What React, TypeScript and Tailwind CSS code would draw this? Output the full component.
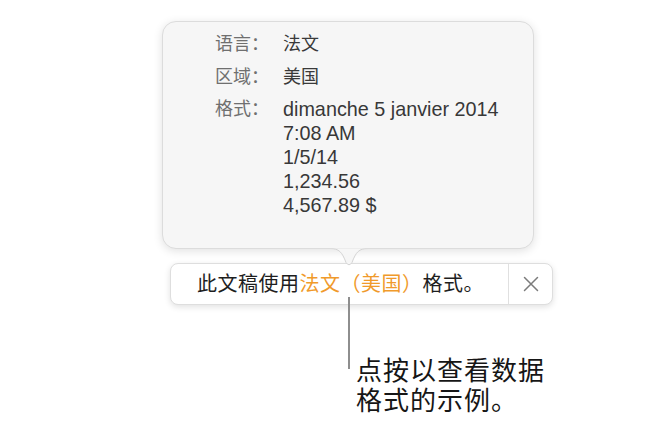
export default function App() {
  const cjk = { fontFamily: '"Liberation Sans", "Noto Sans CJK SC", sans-serif' };
  return (
    <div className="relative w-[657px] h-[422px] bg-white overflow-hidden" style={cjk}>
      <div className="pt-[21px] pl-[162px]">
        <div className="relative w-[372px] h-[228px] rounded-[14px] bg-[#f6f6f6] border border-[#dcdcdc] shadow-[0_2px_10px_rgba(0,0,0,0.12)] pt-[10px] pl-[52px] text-[18px] leading-[24px]">
          <div className="flex">
            <div className="w-[68px] text-[#6f6f6f]">语言：</div>
            <div className="text-[#3a3a3a]">法文</div>
          </div>
          <div className="flex mt-[9px]">
            <div className="w-[68px] text-[#6f6f6f]">区域：</div>
            <div className="text-[#3a3a3a]">美国</div>
          </div>
          <div className="flex mt-[8px]">
            <div className="w-[68px] text-[#6f6f6f]">格式：</div>
            <div className="flex flex-col text-[#383838] text-[19.8px] leading-[24px]">
              <span>dimanche 5 janvier 2014</span>
              <span>7:08 AM</span>
              <span>1/5/14</span>
              <span>1,234.56</span>
              <span>4,567.89 $</span>
            </div>
          </div>
          <svg className="absolute left-[167px] top-[226px] z-10" width="38" height="19" viewBox="0 0 38 19">
            <path d="M0 0.5 C 9 0.5, 12 4, 16 14.5 Q 19 19 22 14.5 C 26 4, 29 0.5, 38 0.5 Z" fill="#f6f6f6" />
            <path d="M0 0.5 C 9 0.5, 12 4, 16 14.5 Q 19 19 22 14.5 C 26 4, 29 0.5, 38 0.5" fill="none" stroke="#d4d4d4" strokeWidth="1" />
            <rect x="0" y="-2" width="38" height="2.2" fill="#f6f6f6" />
          </svg>
        </div>
      </div>
      <div className="ml-[170px] mt-[14px] w-[383px] h-[42px] flex bg-white border border-[#dedede] rounded-[8px] shadow-[0_2px_6px_rgba(0,0,0,0.12)]">
        <div className="flex-1 flex items-center justify-center text-[20px] text-[#1e1e1e] pl-[2px] tracking-[0.5px]">
          <span>此文稿使用</span>
          <span className="text-[#f09a2b]">法文（美国）</span>
          <span>格式。</span>
        </div>
        <div className="w-[44px] border-l border-[#e0e0e0] flex items-center justify-center">
          <svg width="16" height="16" viewBox="0 0 16 16">
            <path d="M1.5 1.5 L14.5 14.5 M14.5 1.5 L1.5 14.5" stroke="#7b7b7b" strokeWidth="1.5" strokeLinecap="round" />
          </svg>
        </div>
      </div>
      <div className="absolute left-[348px] top-[297px] w-[2px] h-[72px] bg-[#8e8e8e]" />
      <div className="ml-[356px] mt-[51px] text-[26px] leading-[30px] text-[#161616] tracking-[1px]">
        <div>点按以查看数据</div>
        <div>格式的示例。</div>
      </div>
    </div>
  );
}
